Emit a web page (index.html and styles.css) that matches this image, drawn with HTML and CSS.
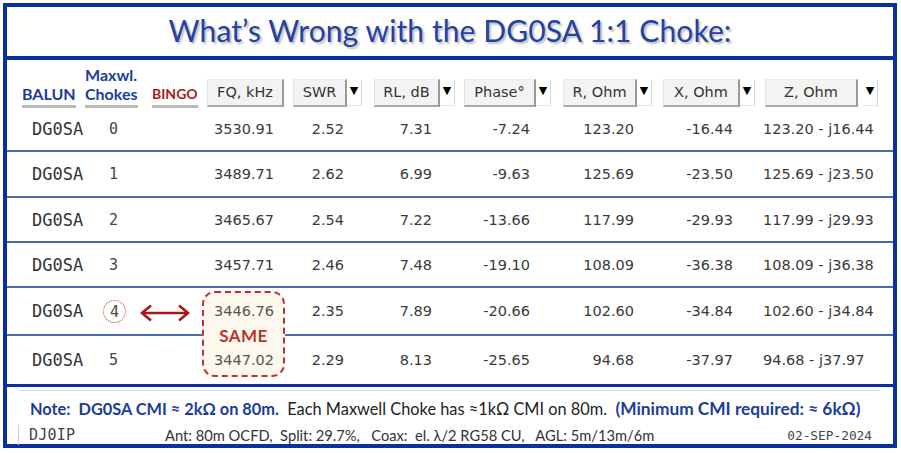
FILE: index.html
```html
<!DOCTYPE html>
<html>
<head>
<meta charset="utf-8">
<link rel="stylesheet" href="styles.css">
</head>
<body>
<div class="frame">
  <div class="title">What’s Wrong with the DG0SA 1:1 Choke:</div>
  <div class="table">
    <div class="hdr">
      <div class="hc c1"><span class="lbl blue">BALUN</span></div>
      <div class="hc c2"><span class="lbl blue two">Maxwl.<br>Chokes</span></div>
      <div class="hc c3"><span class="lbl red">BINGO</span></div>
      <div class="hc c4"><span class="btn w-fq">FQ, kHz</span></div>
      <div class="hc c5"><span class="btn w-swr">SWR</span><span class="dd">▼</span></div>
      <div class="hc c6"><span class="btn w-rl">RL, dB</span><span class="dd">▼</span></div>
      <div class="hc c7"><span class="btn w-ph">Phase°</span><span class="dd">▼</span></div>
      <div class="hc c8"><span class="btn w-r">R, Ohm</span><span class="dd">▼</span></div>
      <div class="hc c9"><span class="btn w-x">X, Ohm</span><span class="dd">▼</span></div>
      <div class="hc c10"><span class="btn w-z">Z, Ohm</span><span class="dd">▼</span></div>
    </div>
    <div class="row h44">
      <div class="bal">DG0SA</div><div class="mx">0</div><div></div>
      <div class="fq">3530.91</div><div class="swr">2.52</div><div class="rl">7.31</div>
      <div class="ph">-7.24</div><div class="r">123.20</div><div class="x">-16.44</div><div class="z">123.20 - j16.44</div>
    </div>
    <div class="row h46">
      <div class="bal">DG0SA</div><div class="mx">1</div><div></div>
      <div class="fq">3489.71</div><div class="swr">2.62</div><div class="rl">6.99</div>
      <div class="ph">-9.63</div><div class="r">125.69</div><div class="x">-23.50</div><div class="z">125.69 - j23.50</div>
    </div>
    <div class="row h45">
      <div class="bal">DG0SA</div><div class="mx">2</div><div></div>
      <div class="fq">3465.67</div><div class="swr">2.54</div><div class="rl">7.22</div>
      <div class="ph">-13.66</div><div class="r">117.99</div><div class="x">-29.93</div><div class="z">117.99 - j29.93</div>
    </div>
    <div class="row h45">
      <div class="bal">DG0SA</div><div class="mx">3</div><div></div>
      <div class="fq">3457.71</div><div class="swr">2.46</div><div class="rl">7.48</div>
      <div class="ph">-19.10</div><div class="r">108.09</div><div class="x">-36.38</div><div class="z">108.09 - j36.38</div>
    </div>
    <div class="row h48">
      <div class="bal">DG0SA</div><div class="mx"><span class="circ">4</span></div><div></div>
      <div class="fq top">3446.76</div><div class="swr">2.35</div><div class="rl">7.89</div>
      <div class="ph">-20.66</div><div class="r">102.60</div><div class="x">-34.84</div><div class="z">102.60 - j34.84</div>
    </div>
    <div class="row h48 last">
      <div class="bal">DG0SA</div><div class="mx">5</div><div></div>
      <div class="fq top">3447.02</div><div class="swr">2.29</div><div class="rl">8.13</div>
      <div class="ph">-25.65</div><div class="r">94.68</div><div class="x">-37.97</div><div class="z">94.68 - j37.97</div>
    </div>
    <div class="same"><span>SAME</span></div>
    <svg class="arrow" width="52" height="18" viewBox="0 0 52 18">
      <path d="M3 9 H49" stroke="#a3191b" stroke-width="2.6" fill="none"/>
      <path d="M12 1.5 L3 9 L12 16.5" stroke="#a3191b" stroke-width="2.6" fill="none"/>
      <path d="M40 1.5 L49 9 L40 16.5" stroke="#a3191b" stroke-width="2.6" fill="none"/>
    </svg>
  </div>
  <div class="footer">
    <div class="note">
      <b class="nb">Note:&nbsp; DG0SA CMI ≈ 2kΩ on 80m.</b>&nbsp; Each Maxwell Choke has ≈1kΩ CMI on 80m.&nbsp; <b class="nb big">(Minimum CMI required: ≈ 6kΩ)</b>
    </div>
    <div class="meta">
      <span class="call">DJ0IP</span>
      <span class="ant">Ant: 80m OCFD,&nbsp; Split: 29.7%,&nbsp;&nbsp; Coax:&nbsp; el. λ/2 RG58 CU,&nbsp;&nbsp; AGL: 5m/13m/6m</span>
      <span class="date">02-SEP-2024</span>
    </div>
  </div>
</div>
</body>
</html>
```
FILE: styles.css
```css
html, body {
  margin: 0;
  padding: 0;
  background: #ffffff;
}
.frame {
  margin: 3px 0 0 3px;
  width: 894px;
  height: 445px;
  box-sizing: border-box;
  border: 4px solid #0c2fa2;
  display: flex;
  flex-direction: column;
  background: #fff;
}
.title {
  height: 53px;
  flex: none;
  border-bottom: 4px solid #0c2fa2;
  display: flex;
  align-items: center;
  justify-content: center;
  font-family: Lato, "Open Sans", sans-serif;
  font-size: 30px;
  color: #2242a4;
  text-shadow: 2px 2px 2px rgba(0, 0, 0, 0.26);
  letter-spacing: 0.1px;
  padding-bottom: 4px;
  box-sizing: border-box;
}
.table {
  position: relative;
  height: 324px;
  flex: none;
  display: flex;
  flex-direction: column;
}
.hdr, .row {
  display: grid;
  grid-template-columns: 73px 68px 52px 90px 80px 92px 95px 102px 99px 135px;
}
.hdr {
  height: 48px;
  flex: none;
}
.hc {
  display: flex;
  align-items: flex-end;
  height: 100%;
}
.lbl {
  font-family: Lato, "Open Sans", sans-serif;
  font-weight: 700;
  font-size: 16px;
  line-height: 17px;
  padding-bottom: 3px;
  border-bottom: 3px solid #b9b9b9;
  position: relative;
  z-index: 3;
}
.lbl.two {
  line-height: 19px;
  padding-bottom: 2px;
}
.blue { color: #1c3c9c; }
.red { color: #a51c1c; font-size: 14px; }
.two { text-align: left; }
.c1 .lbl { margin-left: 15px; }
.c2 .lbl { margin-left: 5px; }
.c3 .lbl { margin-left: 4px; }
.btn {
  display: inline-block;
  box-sizing: border-box;
  height: 28px;
  line-height: 25px;
  text-align: center;
  background: #f3f3f3;
  border-right: 2px solid #9a9a9a;
  border-bottom: 2px solid #a8a8a8;
  border-left: 1px solid #e2e2e2;
  border-top: 1px solid #ececec;
  font-family: "DejaVu Sans", Verdana, sans-serif;
  font-size: 14.5px;
  color: #333;
  margin-bottom: 1px;
  position: relative;
  z-index: 3;
}
.dd {
  display: inline-block;
  box-sizing: border-box;
  height: 26px;
  width: 15px;
  line-height: 22px;
  text-align: center;
  font-size: 11px;
  font-family: "DejaVu Sans", sans-serif;
  color: #000;
  border-right: 1px solid #d6d6d6;
  border-bottom: 1px solid #e4e4e4;
  margin-bottom: 2px;
}
.c4 .btn { margin-left: 7px; width: 77px; }
.c5 .btn { margin-left: 3px; width: 54px; }
.c6 .btn { margin-left: 4px; width: 66px; }
.c7 .btn { margin-left: 2px; width: 72px; }
.c8 .btn { margin-left: 6px; width: 74px; }
.c9 .btn { margin-left: 4px; width: 77px; }
.c10 .btn { margin-left: 7px; width: 93px; }
.c10 .dd { margin-left: 5px; }

.row {
  flex: none;
  box-sizing: border-box;
  border-bottom: 2px solid #4d6aa8;
  align-items: center;
  font-family: "DejaVu Sans", Verdana, sans-serif;
  font-size: 14.5px;
  color: #3a3a3a;
}
.row.last { border-bottom: none; }
.h44 { height: 44px; }
.h46 { height: 46px; }
.h45 { height: 45px; }
.h48 { height: 48px; }
.row > div { white-space: nowrap; }
.bal {
  font-family: "DejaVu Sans Mono", monospace;
  font-size: 17px;
  padding-left: 25px;
  color: #333;
}
.mx {
  font-family: "DejaVu Sans Mono", monospace;
  font-size: 15px;
  padding-left: 29px;
  color: #444;
}
.circ {
  display: inline-block;
  width: 23px;
  height: 23px;
  line-height: 22px;
  margin-left: -6px;
  text-align: center;
  border: 1.5px dotted #c8403c;
  border-radius: 50%;
  box-sizing: border-box;
}
.fq { text-align: right; padding-right: 16px; }
.fq.top { position: relative; z-index: 2; color: #555; }
.swr { text-align: right; padding-right: 26px; }
.rl { text-align: right; padding-right: 30px; }
.ph { text-align: right; padding-right: 27px; }
.r { text-align: right; padding-right: 25px; }
.x { text-align: right; padding-right: 25px; }
.z { text-align: left; padding-left: 5px; }

.same {
  position: absolute;
  left: 195px;
  top: 231px;
  width: 83px;
  height: 86px;
  box-sizing: border-box;
  border: 2px dashed #c0302c;
  border-radius: 13px;
  background: #fdf8ee;
  z-index: 1;
  display: flex;
  align-items: center;
  justify-content: center;
}
.same span {
  font-family: Lato, "Open Sans", sans-serif;
  font-weight: 700;
  font-size: 17px;
  color: #b4362f;
  letter-spacing: 0.5px;
  margin-top: 2px;
}
.arrow {
  position: absolute;
  left: 132px;
  top: 244px;
}

.footer {
  border-top: 3px solid #0c2fa2;
  flex: 1;
  padding: 3px 13px 0 13px;
  box-sizing: border-box;
}
.note {
  border-top: 1px solid #dcdcdc;
  padding: 8px 0 0 10px;
  font-family: Lato, "Open Sans", sans-serif;
  font-size: 16.35px;
  line-height: 20px;
  color: #222;
  white-space: nowrap;
}
.nb { color: #1c3c9c; font-weight: 700; }
.big { font-size: 17.3px; }
.meta {
  display: flex;
  align-items: center;
  margin-top: 6px;
  border-left: 1px solid #cfcfcf;
  margin-left: -2px;
  padding-left: 10px;
  height: 20px;
  white-space: nowrap;
}
.call {
  font-family: "DejaVu Sans Mono", monospace;
  font-size: 15px;
  color: #444;
  letter-spacing: 0.2px;
  width: 136px;
}
.ant {
  font-family: Lato, "Open Sans", sans-serif;
  font-size: 14.7px;
  color: #333;
}
.date {
  margin-left: auto;
  margin-right: 8px;
  font-family: "DejaVu Sans Mono", monospace;
  font-size: 12.8px;
  color: #444;
}
```
